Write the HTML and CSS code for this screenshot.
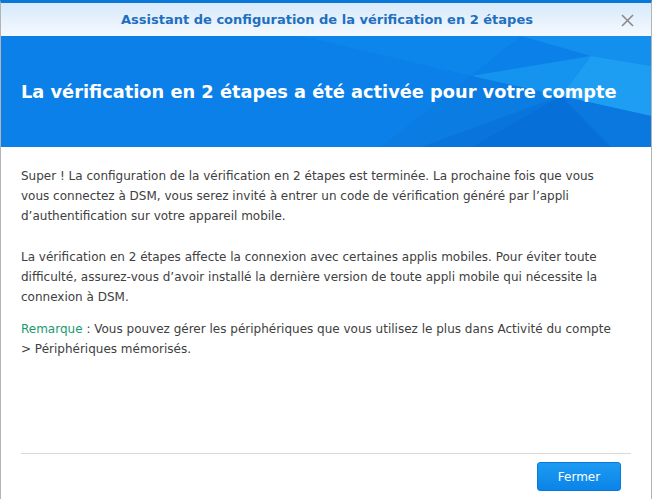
FILE: index.html
```html
<!DOCTYPE html>
<html lang="fr">
<head>
    <meta charset="UTF-8">
    <title>Assistant de configuration</title>
    <link rel="stylesheet" href="styles.css">
</head>
<body>
    <div class="dialog">
        <div class="titlebar">
            <span class="title">Assistant de configuration de la vérification en 2 étapes</span>
            <span class="close" aria-label="Fermer">
                <svg width="13" height="13" viewBox="0 0 13 13">
                    <path d="M1 1 L12 12 M12 1 L1 12" stroke="#8a8a8a" stroke-width="1.6" fill="none"/>
                </svg>
            </span>
        </div>

        <div class="banner">
            <svg class="facets" viewBox="0 0 650 111" preserveAspectRatio="none">
                <rect width="650" height="111" fill="#0a80e8"/>
                <polygon points="300,0 520,0 470,40" fill="#0c86ea"/>
                <polygon points="520,0 650,0 650,30 590,20" fill="#1390ee"/>
                <polygon points="470,40 590,20 560,60" fill="#1493ef"/>
                <polygon points="590,20 650,30 650,80 560,60" fill="#1e9ef2"/>
                <polygon points="560,60 650,80 650,111 610,111" fill="#0a78de"/>
                <polygon points="560,60 610,111 470,111" fill="#0670d8"/>
                <polygon points="470,40 560,60 420,111 380,111" fill="#0b7ce2"/>
                <polygon points="420,111 560,60 470,111" fill="#0874dc"/>
            </svg>
            <h1>La vérification en 2 étapes a été activée pour votre compte</h1>
        </div>

        <div class="content">
            <p>Super ! La configuration de la vérification en 2 étapes est terminée. La prochaine fois que vous vous connectez à DSM, vous serez invité à entrer un code de vérification généré par l’appli d’authentification sur votre appareil mobile.</p>
            <p class="spaced">La vérification en 2 étapes affecte la connexion avec certaines applis mobiles. Pour éviter toute difficulté, assurez-vous d’avoir installé la dernière version de toute appli mobile qui nécessite la connexion à DSM.</p>
            <p class="note"><span class="note-label">Remarque</span> : Vous pouvez gérer les périphériques que vous utilisez le plus dans Activité du compte &gt; Périphériques mémorisés.</p>
        </div>

        <div class="footer">
            <button type="button">Fermer</button>
        </div>
    </div>
</body>
</html>
```

FILE: styles.css
```css
html, body {
    margin: 0;
    padding: 0;
    height: 100%;
    background: #fff;
}

body {
    font-family: 'DejaVu Sans', Verdana, sans-serif;
    color: #404040;
}

.dialog {
    height: 100%;
    display: flex;
    flex-direction: column;
    border-top: 3px solid #0a78d8;
    border-left: 1px solid #b4b4b4;
    border-right: 1px solid #b4b4b4;
    box-sizing: border-box;
}

.titlebar {
    height: 33px;
    display: flex;
    align-items: center;
    justify-content: center;
    position: relative;
    background: linear-gradient(#d6e9fb, #f5f9fe);
}

.title {
    font-size: 13px;
    font-weight: bold;
    color: #1f6fc0;
    margin-left: 2px;
}

.close {
    position: absolute;
    right: 17px;
    top: 11px;
    display: flex;
}

.banner {
    height: 111px;
    position: relative;
    display: flex;
    align-items: center;
    overflow: hidden;
}

.facets {
    position: absolute;
    left: 0;
    top: 0;
    width: 100%;
    height: 100%;
}

.banner h1 {
    position: relative;
    margin: 0 0 0 20px;
    font-size: 17.8px;
    font-weight: bold;
    color: #fff;
}

.content {
    flex: 1;
    padding: 19px 30px 0 20px;
    font-size: 12px;
    line-height: 20px;
}

.content p {
    margin: 0;
}

.content .spaced {
    margin-top: 21px;
}

.content .note {
    margin-top: 12px;
}

.note-label {
    color: #1a9a6e;
}

.footer {
    margin: 0 20px;
    border-top: 1px solid #dadada;
    padding: 8px 0 8px;
    display: flex;
    justify-content: flex-end;
}

button {
    width: 84px;
    height: 29px;
    margin-right: 10px;
    border: 1px solid #0a78d8;
    border-radius: 3px;
    background: linear-gradient(#1d9bf2, #0a84e8);
    color: #fff;
    font-family: 'DejaVu Sans', Verdana, sans-serif;
    font-size: 12px;
    cursor: pointer;
}
```
